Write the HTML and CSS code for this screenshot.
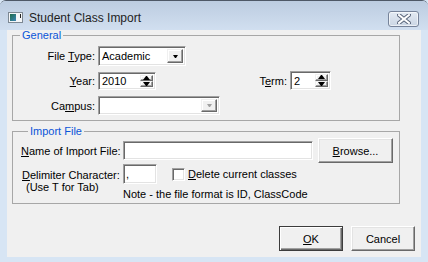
FILE: index.html
```html
<!DOCTYPE html>
<html lang="en">
<head>
    <meta charset="UTF-8">
    <title>Student Class Import</title>
    <link rel="stylesheet" href="styles.css">
</head>
<body>

    <div class="window">
        <div class="titlebar">
            <svg class="app-icon" width="15" height="11" viewBox="0 0 15 11">
                <defs>
                    <linearGradient id="ico" x1="0" y1="0" x2="1" y2="1">
                        <stop offset="0" stop-color="#1d6b4a"/>
                        <stop offset="1" stop-color="#3d86b8"/>
                    </linearGradient>
                </defs>
                <rect x="0.5" y="0.5" width="14" height="10" fill="#f4f6f8" stroke="#7d8893"/>
                <rect x="2" y="2" width="6" height="7" fill="url(#ico)"/>
                <rect x="12" y="2" width="1" height="4" fill="#222"/>
            </svg>
            <span class="title">Student Class Import</span>
            <span class="close-btn">
                <svg width="14" height="10" viewBox="0 0 14 10">
                    <path d="M2 1 L12 9 M12 1 L2 9" stroke="#5b677c" stroke-width="4" stroke-linecap="square"/>
                    <path d="M2 1 L12 9 M12 1 L2 9" stroke="#fff" stroke-width="2" stroke-linecap="square"/>
                </svg>
            </span>
        </div>

        <div class="client">
            <fieldset class="group group-general">
                <legend>General</legend>
                <div class="row row-type">
                    <label class="lbl">File <u>T</u>ype:</label>
                    <div class="combo combo-type">
                        <span class="combo-text">Academic</span>
                        <span class="combo-btn"><i class="arrow"></i></span>
                    </div>
                </div>
                <div class="row row-year">
                    <label class="lbl"><u>Y</u>ear:</label>
                    <div class="spin spin-year">
                        <input class="spin-input" value="2010">
                        <span class="spin-btns">
                            <span class="spin-btn"><i class="tri-up"></i></span>
                            <span class="spin-btn"><i class="tri-down"></i></span>
                        </span>
                    </div>
                    <label class="lbl lbl-term">T<u>e</u>rm:</label>
                    <div class="spin spin-term">
                        <input class="spin-input" value="2">
                        <span class="spin-btns">
                            <span class="spin-btn"><i class="tri-up"></i></span>
                            <span class="spin-btn"><i class="tri-down"></i></span>
                        </span>
                    </div>
                </div>
                <div class="row row-campus">
                    <label class="lbl">Ca<u>m</u>pus:</label>
                    <div class="combo combo-campus disabled">
                        <span class="combo-text"></span>
                        <span class="combo-btn"><i class="arrow"></i></span>
                    </div>
                </div>
            </fieldset>

            <fieldset class="group group-import">
                <legend>Import File</legend>
                <div class="row row-file">
                    <label class="col-left"><u>N</u>ame of Import File:</label>
                    <input class="field field-file" value="">
                    <button class="btn btn-browse"><u>B</u>rowse...</button>
                </div>
                <div class="row row-delim">
                    <div class="col-left delim-labels">
                        <div class="delim-line"><u>D</u>elimiter Character:</div>
                        <div class="delim-hint">(Use T for Tab)</div>
                    </div>
                    <div class="delim-right">
                        <div class="delim-controls">
                            <input class="field field-delim" value=",">
                            <span class="checkbox"></span>
                            <span class="check-label"><u>D</u>elete current classes</span>
                        </div>
                        <div class="note">Note - the file format is ID, ClassCode</div>
                    </div>
                </div>
            </fieldset>

            <div class="button-bar">
                <button class="btn btn-default"><u>O</u>K</button>
                <button class="btn">Cancel</button>
            </div>
        </div>
    </div>

</body>
</html>
```

FILE: styles.css
```css
body {
    margin: 0;
    background: #d7e5f4;
    font-family: "Liberation Sans", Arial, sans-serif;
    font-size: 11px;
    color: #000;
}

u {
    text-decoration: underline;
    text-underline-offset: 1px;
}

.window {
    width: 428px;
    height: 262px;
    box-sizing: border-box;
    border-top: 1px solid #4e5866;
    border-radius: 6px 6px 0 0;
    background: #d7e5f4;
    overflow: hidden;
}

.titlebar {
    display: flex;
    align-items: flex-start;
    height: 29px;
    box-sizing: border-box;
    padding: 10px 9px 0 8px;
    background: linear-gradient(#bccce0, #d1dff0);
}

.app-icon {
    margin-top: 1px;
}

.title {
    margin-left: 6px;
    font-size: 12px;
    line-height: 14px;
    color: #1e1e1e;
}

.close-btn {
    margin-left: auto;
    width: 31px;
    height: 16px;
    box-sizing: border-box;
    border: 1px solid #76839a;
    border-radius: 3px;
    background: linear-gradient(#e3eaf3, #cbd6e4);
    box-shadow: inset 0 0 0 1px rgba(255, 255, 255, 0.6);
    display: flex;
    justify-content: center;
    align-items: center;
}

.client {
    margin: 0 7px;
    height: 227px;
    box-sizing: border-box;
    padding: 0 6px 0 5px;
    background: #f0f0f0;
}

/* group boxes */
.group {
    width: 388px;
    box-sizing: border-box;
    margin: 0;
    padding: 0 0 5px 0;
    border: 1px solid #a7a7a7;
    border-radius: 0;
}

.group legend {
    margin-left: 7px;
    padding: 0 2px;
    line-height: 11px;
    color: #0b55d8;
}

.group-import {
    margin-top: 5px;
    padding: 0 0 2px 8px;
}

.row {
    display: flex;
    align-items: center;
}

.lbl {
    width: 82px;
    margin-right: 3px;
    text-align: right;
}

.lbl-term {
    width: 131px;
}

.row-type {
    margin-top: 5px;
    height: 20px;
}

.row-year {
    margin-top: 5px;
    height: 19px;
}

.row-campus {
    margin-top: 6px;
    height: 19px;
}

/* sunken fields */
.combo,
.spin,
.field,
.checkbox {
    box-sizing: border-box;
    border: 1px solid;
    border-color: #a0a0a0 #fff #fff #a0a0a0;
    box-shadow: inset 1px 1px #696969, inset -1px -1px #e3e3e3;
    background: #fff;
}

.combo {
    display: flex;
    align-items: stretch;
    padding: 2px;
}

.combo-type {
    width: 88px;
    height: 20px;
}

.combo-campus {
    width: 122px;
    height: 19px;
}

.combo-text {
    flex: 1;
    padding-left: 1px;
    line-height: 15px;
}

.combo-btn,
.spin-btn {
    box-sizing: border-box;
    background: #f0f0f0;
    border: 1px solid;
    border-color: #f0f0f0 #696969 #696969 #f0f0f0;
    box-shadow: inset -1px -1px #a0a0a0, inset 1px 1px #fff;
    display: flex;
    justify-content: center;
    align-items: center;
}

.combo-btn {
    width: 16px;
}

.arrow {
    width: 1px;
    border-left: 2px solid transparent;
    border-right: 2px solid transparent;
    border-top: 3px solid #000;
}

.disabled .arrow {
    border-top-color: #a0a0a0;
}

.spin {
    display: flex;
    padding: 2px;
}

.spin-year {
    width: 58px;
    height: 18px;
}

.spin-term {
    width: 41px;
    height: 19px;
}

.spin-input {
    flex: 1;
    width: 0;
    border: none;
    outline: none;
    padding: 0 0 0 1px;
    margin: 0;
    font: inherit;
    background: transparent;
}

.spin-btns {
    display: flex;
    flex-direction: column;
    width: 13px;
}

.spin-btn {
    flex: 1;
}

.tri-up {
    width: 1px;
    border-left: 3px solid transparent;
    border-right: 3px solid transparent;
    border-bottom: 4px solid #000;
}

.tri-down {
    width: 1px;
    border-left: 3px solid transparent;
    border-right: 3px solid transparent;
    border-top: 4px solid #000;
}

/* import file */
.row-file {
    margin-top: 1px;
    height: 25px;
}

.col-left {
    width: 102px;
    flex-shrink: 0;
}

.field {
    margin: 0;
    padding: 0 2px;
    outline: none;
    font: inherit;
}

.field-file {
    width: 190px;
    height: 19px;
}

.btn {
    box-sizing: border-box;
    width: 64px;
    height: 25px;
    margin: 0;
    padding: 0;
    font: inherit;
    color: #000;
    background: #f0f0f0;
    border: 1px solid;
    border-color: #fff #696969 #696969 #fff;
    box-shadow: inset -1px -1px #a0a0a0, inset 1px 1px #e3e3e3;
}

.btn-browse {
    width: 75px;
    margin-left: 5px;
}

.row-delim {
    margin-top: 1px;
    align-items: flex-start;
}

.delim-labels {
    padding-top: 5px;
    line-height: 12px;
}

.delim-line {
    padding-left: 1px;
}

.delim-hint {
    padding-left: 5px;
}

.delim-controls {
    display: flex;
    align-items: center;
    height: 20px;
}

.field-delim {
    width: 34px;
    height: 20px;
}

.checkbox {
    width: 13px;
    height: 13px;
    margin-left: 15px;
}

.check-label {
    margin-left: 3px;
}

.note {
    margin-top: 4px;
    line-height: 13px;
}

.button-bar {
    display: flex;
    justify-content: flex-end;
    gap: 8px;
    margin-top: 22px;
}

.btn-default {
    border: 1px solid #3c3c3c;
    box-shadow: inset 1px 1px #fff, inset -1px -1px #696969, inset -2px -2px #a0a0a0;
}
```
